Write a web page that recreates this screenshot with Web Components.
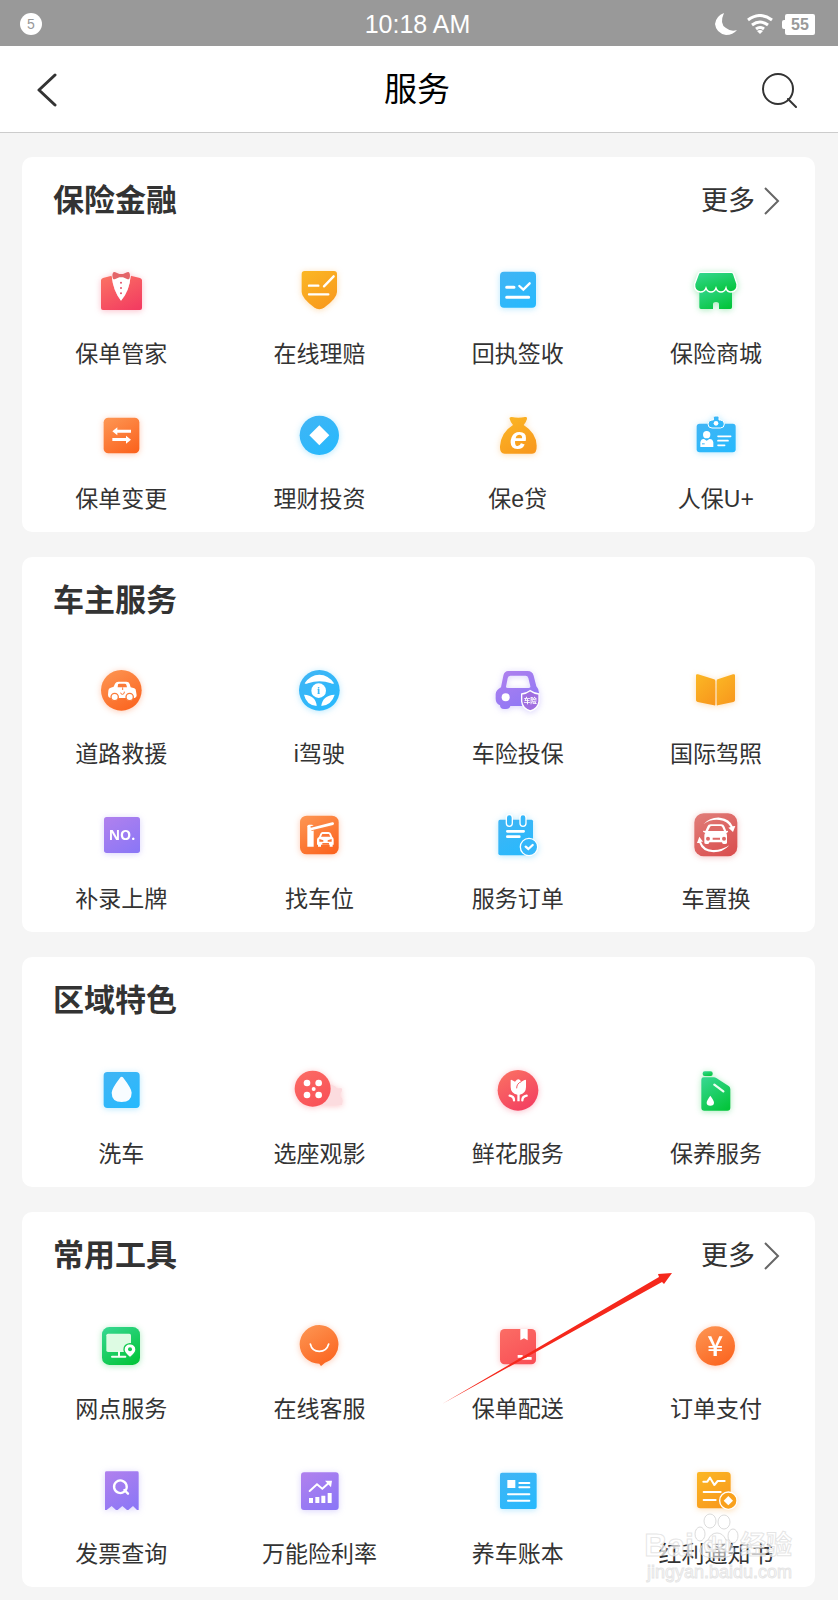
<!DOCTYPE html>
<html lang="zh-CN">
<head>
<meta charset="utf-8">
<meta name="viewport" content="width=device-width, initial-scale=1">
<title>服务</title>
<style>
    body{
        margin:0;
        min-height:100vh;
        background:#f5f5f5;
        color:#333;
        font-family:"Liberation Sans","Noto Sans CJK SC",sans-serif;
    }

    main{
        display:flex;
        flex-direction:column;
        gap:25px;
        padding:24px 23px 13px 22px;
    }
</style>
</head>
<body>
<status-bar count="5" battery="55">10:18 AM</status-bar>
<nav-bar>服务</nav-bar>

<main>
    <service-card more>
        <span slot="title">保险金融</span>
        <service-tile icon="butler" tone="red">保单管家</service-tile>
        <service-tile icon="shield" tone="amber">在线理赔</service-tile>
        <service-tile icon="receipt" tone="blue">回执签收</service-tile>
        <service-tile icon="shop" tone="green">保险商城</service-tile>
        <service-tile icon="change" tone="orange">保单变更</service-tile>
        <service-tile icon="invest" tone="blue">理财投资</service-tile>
        <service-tile icon="loan" tone="amber">保e贷</service-tile>
        <service-tile icon="member" tone="blue">人保U+</service-tile>
    </service-card>

    <service-card>
        <span slot="title">车主服务</span>
        <service-tile icon="rescue" tone="orange">道路救援</service-tile>
        <service-tile icon="wheel" tone="blue">i驾驶</service-tile>
        <service-tile icon="insure" tone="purple">车险投保</service-tile>
        <service-tile icon="book" tone="amber">国际驾照</service-tile>
        <service-tile icon="plate" tone="purple">补录上牌</service-tile>
        <service-tile icon="parking" tone="orange">找车位</service-tile>
        <service-tile icon="order" tone="blue">服务订单</service-tile>
        <service-tile icon="swap" tone="brick">车置换</service-tile>
    </service-card>

    <service-card>
        <span slot="title">区域特色</span>
        <service-tile icon="wash" tone="blue">洗车</service-tile>
        <service-tile icon="movie" tone="coral">选座观影</service-tile>
        <service-tile icon="flower" tone="red">鲜花服务</service-tile>
        <service-tile icon="oil" tone="green">保养服务</service-tile>
    </service-card>

    <service-card more>
        <span slot="title">常用工具</span>
        <service-tile icon="branch" tone="green">网点服务</service-tile>
        <service-tile icon="smile" tone="orange">在线客服</service-tile>
        <service-tile icon="parcel" tone="coral">保单配送</service-tile>
        <service-tile icon="pay" tone="orange">订单支付</service-tile>
        <service-tile icon="invoice" tone="purple">发票查询</service-tile>
        <service-tile icon="rate" tone="purple">万能险利率</service-tile>
        <service-tile icon="ledger" tone="blue">养车账本</service-tile>
        <service-tile icon="notice" tone="amber">红利通知书</service-tile>
        <pointer-arrow slot="overlay"></pointer-arrow>
        <water-mark slot="overlay"></water-mark>
    </service-card>
</main>

<script>
// start and end colour of each icon gradient
const tones = {
    red:['#fa6f63','#f33d61'],
    coral:['#fb6b64','#f94f56'],
    brick:['#e07a76','#da4f4f'],
    orange:['#fd9350','#fb641f'],
    amber:['#fbb524','#f8981d'],
    blue:['#3fb5f5','#27b9fd'],
    green:['#33d68c','#04c53b'],
    purple:['#ae80ee','#8c77f6']
}

// every icon is drawn on a 144 x 144 grid, "url(#g)" is the tone of the tile
const icons = {
    butler:`
        <path fill="url(#g)" d="M12 43q0-5 6-7l26-7q4 46 28 75q26-29 29-75l28 7q6 2 6 7v83q0 6-6 6H18q-6 0-6-6z"/>
        <path fill="#fff" d="M44 28q4 46 28 76q26-30 29-76z"/>
        <path fill="#e46469" d="M48 20q2-3 7-1l12 5h11l12-5q5-2 7 1q4 9 0 18q-2 3-7 1l-12-5H67l-12 5q-5 2-7-1q-4-9 0-18z"/>
        <g fill="#e4526a"><circle cx="72" cy="50" r="3"/><circle cx="72" cy="66" r="3"/><circle cx="72" cy="82" r="3"/></g>`,
    shield:`
        <path fill="url(#g)" d="M29 15h88q9 0 9 9v54q0 18-37 46q-16 12-32 0Q20 96 20 78V24q0-9 9-9z"/>
        <path stroke="#fff" stroke-width="7" stroke-linecap="round" d="M42 59h28M87 61l29-30M42 85h58"/>`,
    receipt:`
        <rect x="18" y="17" width="108" height="108" rx="12" fill="url(#g)"/>
        <g fill="none" stroke="#fff" stroke-linecap="round"><path stroke-width="9" d="M38 64h22M38 94h66"/><path stroke-width="7" d="M76 60l12 11l19-19"/></g>`,
    shop:`
        <path fill="url(#g)" d="M22 60h98v64q0 5-5 5H81v-15q0-6-9-6t-9 6v15H27q-5 0-5-5z"/>
        <path fill="url(#g)" stroke="#fff" stroke-width="4" d="M19 24q1-5 7-5h92q5 0 7 5l10 30q2 22-18 24q-12 0-15-12q-4 12-15 12t-15-12q-4 12-15 12T42 66q-4 12-17 12Q6 76 8 54z"/>`,
    change:`
        <rect x="20" y="20" width="107" height="107" rx="14" fill="url(#g)"/>
        <g fill="#fff"><path d="M46 61l15-12v7h41v9H61v8z"/><path d="M102 86l-15-12v7H46v9h41v8z"/></g>`,
    invest:`
        <circle cx="73" cy="73" r="59" fill="url(#g)"/>
        <path fill="#fff" d="M73 43l30 30l-30 30l-30-30z"/>`,
    loan:`
        <path fill="url(#g)" d="M47 24q-2-6 6-6q20 4 40 0q8-1 6 6q-2 8-10 18q38 24 39 62q1 24-14 24H32q-15 0-14-22q3-42 39-64q-8-10-10-18z"/>
        <text x="73" y="113" text-anchor="middle" fill="#fff" font-family="Liberation Sans" font-weight="700" font-style="italic" font-size="92">e</text>`,
    member:`
        <rect x="14" y="38" width="117" height="86" rx="9" fill="url(#g)"/>
        <path fill="url(#g)" stroke="#fff" stroke-width="3" d="M60 27h4v-8q0-4 5-4h7q5 0 5 4v8h4q12 0 12 12t-12 12H60q-12 0-12-12t12-12z"/>
        <g fill="#fff"><circle cx="72" cy="37" r="7"/><circle cx="44" cy="71" r="11"/><path d="M25 94q2-11 11-10l8 5l8-5q10-1 12 10v14H25z"/></g>
        <path fill="#3db6f7" d="M30 97h8v3h-8z"/>
        <path stroke="#fff" stroke-width="5" stroke-linecap="round" d="M78 76h38M78 89h30M78 103h20"/>`,
    rescue:`
        <circle cx="73" cy="73" r="61" fill="url(#g)"/>
        <path fill="#fff" d="M50 62l4-9q3-6 10-6h24q8 0 10 7l3 10l11 3q5 2 5 9l2 12q0 6-6 8H40q-7-2-7-9l1-13q0-8 7-9z"/>
        <path fill="#fb7b39" d="M63 55q1-2 4-2h16q4 0 5 3l2 8H62z"/>
        <path fill="none" stroke="#fb7b39" stroke-width="3" d="M77 64v8M71 80q1 6 6 5q6-1 5-8"/>
        <g fill="#fff" stroke="#fb7b39" stroke-width="4"><circle cx="53" cy="93" r="11"/><circle cx="98" cy="93" r="11"/></g>`,
    wheel:`
        <circle cx="73" cy="73" r="61" fill="url(#g)"/>
        <path fill="#fff" d="M29 52q17-26 44-26t44 26q-3 3-9 0q-34-12-69 0q-7 3-10 0z"/>
        <circle cx="71" cy="74" r="22" fill="#fff"/>
        <path fill="#fff" d="M27 86q36 2 38 34q-31-3-38-34zM119 86q-37 2-40 34q31-3 40-34z"/>
        <text x="71" y="85" text-anchor="middle" fill="#37b7f8" font-family="Liberation Serif" font-weight="700" font-size="34">i</text>`,
    insure:`
        <path fill="url(#g)" fill-rule="evenodd" d="M43 15h58q14 0 18 14l8 32q8 8 8 20v30q0 8-10 9H49q-2 9-13 9h-6q-12 0-12-11Q5 112 5 98V84q1-12 16-20l7-35q3-14 15-14zm6 14q-7 0-8 8l-5 25q0 4 5 4h64q5 0 4-5l-6-25q-2-7-8-7z"/>
        <circle cx="35" cy="94" r="12" fill="#fff"/>
        <path fill="#a06fe0" stroke="#fff" stroke-width="4" d="M108 74q13 9 27 10v22q-2 21-26 29q-24-8-26-29V84q13-1 25-10z"/>
        <text x="109" y="111" text-anchor="middle" fill="#fff" font-weight="700" font-size="20">车险</text>`,
    book:`
        <path fill="url(#g)" d="M12 28q0-5 6-3l48 15q4 1 4 5v71q0 3-4 2l-49-10q-5-1-5-5z"/>
        <path fill="url(#g)" d="M129 28q0-5-6-3L77 40q-3 1-3 5v71q0 3 3 2l47-10q5-1 5-5z"/>`,
    plate:`
        <rect x="21" y="18" width="108" height="108" rx="8" fill="url(#g)"/>
        <text x="75" y="88" text-anchor="middle" fill="#fff" font-family="Open Sans" font-weight="700" font-size="42">NO.</text>`,
    parking:`
        <rect x="15" y="14" width="116" height="116" rx="20" fill="url(#g)"/>
        <path fill="#fff" d="M37 46q0-5 5-5h9q5 0 5 5v61H37z"/>
        <path stroke="#fb8444" stroke-width="15" d="M48 53l66-15"/>
        <path stroke="#fff" stroke-width="8" stroke-linecap="round" d="M49 54l64-16"/>
        <path fill="#fff" d="M72 78l4-10q2-5 7-5h17q6 0 8 5l4 10q4 2 4 8v15h-3v6h-9v-6H78v6h-9v-6h-3V86q0-6 6-8z"/>
        <path fill="#fb7737" d="M78 77l4-8h20l4 8zM73 84l12 4v4H73zM110 84l-12 4v4h12zM82 96h20v5H82z"/>`,
    order:`
        <path fill="url(#g)" d="M18 26h95q4 0 4 5v97q0 5-5 5H19q-6 0-6-6V32q0-6 5-6z"/>
        <g fill="#35b7fa" stroke="#fff" stroke-width="4"><rect x="37" y="11" width="18" height="35" rx="9"/><rect x="78" y="11" width="18" height="35" rx="9"/></g>
        <path stroke="#fff" stroke-width="8" stroke-linecap="round" d="M40 61h49M40 77h36"/>
        <circle cx="105" cy="108" r="26" fill="#35b7fa" stroke="#fff" stroke-width="4"/>
        <path fill="none" stroke="#fff" stroke-width="7" stroke-linecap="round" d="M95 107l8 7l13-12"/>`,
    swap:`
        <rect x="7" y="7" width="129" height="129" rx="28" fill="url(#g)"/>
        <path fill="#fff" d="M40 60l7-15q2-5 9-5h32q7 0 9 6l6 14l4-1q3 2 0 5l-4 3q2 3 2 8v20q0 4-6 4h-4q-5 0-5-5H52q0 5-5 5h-4q-6 0-6-4V74q0-6 3-8l-6-3q-3-4 1-4z"/>
        <path fill="#dd6a67" d="M48 60l6-12q1-3 5-3h26q4 0 6 4l5 11zM62 80h22v6H62z"/>
        <circle cx="48" cy="83" r="6" fill="#dd6a67"/><circle cx="96" cy="83" r="6" fill="#dd6a67"/>
        <path fill="#fff" d="M34 40q20-22 50-20q30 4 38 26l8-1l-7 18l-14-13l7-2q-10-18-34-21q-26-3-48 13zM112 103q-19 21-47 21q-34-1-43-28h-7l7-19l11 15h-6q8 22 35 25q27 1 50-14z"/>`,
    wash:`
        <rect x="20" y="18" width="108" height="108" rx="11" fill="url(#g)"/>
        <path fill="#f8fcff" d="M74 32q4 0 7 6q23 30 23 42q0 28-30 28T44 80q0-12 23-42q3-6 7-6z"/>`,
    movie:`
        <path fill="#fcdcdf" d="M100 52l22 10q3 7 10 5h8q3 8-3 14q-5 5 0 12q8 5 5 16l-1 8H84q-2-5 2-8z"/>
        <circle cx="53" cy="68" r="54" fill="url(#g)"/>
        <g fill="#fff"><circle cx="36" cy="51" r="10"/><circle cx="71" cy="51" r="10"/><circle cx="36" cy="87" r="10"/><circle cx="71" cy="87" r="10"/><circle cx="56" cy="69" r="6"/></g>`,
    flower:`
        <circle cx="72" cy="73" r="61" fill="url(#g)"/>
        <path fill="#fff" d="M50 43q1-3 5 0l8 4q6-7 10-7t9 7l8-4q5-3 6 0v20q0 19-19 23v20h-7V86Q50 82 50 63z"/>
        <path fill="none" stroke="#f75a63" stroke-width="3" d="M82 47q-14 5-14 20"/>
        <g fill="none" stroke="#fff" stroke-width="7" stroke-linecap="round"><path d="M47 89q13 2 13 14M98 89q-13 2-13 14"/></g>`,
    oil:`
        <rect x="32" y="16" width="30" height="14" rx="6" fill="url(#g)"/>
        <path fill="url(#g)" d="M28 41q0-7 7-7h30q5 0 9 3l37 24q4 3 4 9v55q0 9-9 9H37q-9 0-9-9z"/>
        <path stroke="#e9fff0" stroke-width="7" stroke-linecap="round" d="M67 56l27 20"/>
        <path fill="#fff" d="M55 89q11 15 11 21q0 9-11 9t-11-9q0-6 11-21z"/>`,
    branch:`
        <rect x="15" y="18" width="114" height="114" rx="22" fill="url(#g)"/>
        <rect x="28" y="38" width="74" height="55" rx="5" fill="#ddfbe3"/>
        <path stroke="#f4fff6" stroke-width="6" stroke-linecap="round" d="M66 93v13M45 107h40"/>
        <path fill="#fff" stroke="#12c94f" stroke-width="4" d="M99 68q18 2 18 18q0 9-18 24q-18-15-18-24q0-16 18-18z"/>
        <circle cx="99" cy="85" r="6" fill="#12c94f"/>`,
    smile:`
        <path fill="url(#g)" d="M73 12a59 58 0 0 1 17 113l-9 8q-3 3-5 0l-3-5a59 58 0 0 1 0-116z"/>
        <path fill="none" stroke="#fff" stroke-width="5" stroke-linecap="round" d="M46 69q5 22 27 22t28-22"/>`,
    parcel:`
        <rect x="18" y="24" width="108" height="106" rx="14" fill="url(#g)"/>
        <path fill="#fff" d="M79 24h22v34l-11-6l-11 6zM98 108h15v8H80v-5h18zM71 102h15v8H71z"/>`,
    pay:`
        <circle cx="70" cy="75" r="59" fill="url(#g)"/>
        <text x="70" y="106" text-anchor="middle" fill="#fff" font-family="Noto Sans CJK SC" font-weight="500" font-size="84">¥</text>`,
    invoice:`
        <path fill="url(#g)" d="M29 16h92q4 0 4 4v112h-5l-12-12l-14 12h-4l-14-12l-14 12h-5l-13-12l-15 12h-5V20q0-4 5-4z"/>
        <path fill="none" stroke="#fff" stroke-width="7" stroke-linecap="round" d="M85 74a19 19 0 1 0-3 3M82 72l11 11"/>`,
    rate:`
        <rect x="18" y="19" width="113" height="113" rx="9" fill="url(#g)"/>
        <path fill="none" stroke="#fff" stroke-width="6" stroke-linecap="round" d="M44 75l22-20l16 13l20-18"/>
        <path fill="#fff" d="M90 44h21l-3 20zM42 96h12v15H42zM61 93h12v18H61zM79 89h12v22H79zM98 81h12v30H98z"/>`,
    ledger:`
        <rect x="18" y="20" width="110" height="109" rx="6" fill="url(#g)"/>
        <path fill="#fff" d="M40 42h24v24H40z"/>
        <path stroke="#fff" stroke-width="6" stroke-linecap="round" d="M76 51h30M76 64h30M42 85h64M42 104h64"/>`,
    notice:`
        <path fill="url(#g)" d="M21 18h84q11 0 11 11v92q0 6-6 6H25q-10 0-10-10V24q0-6 6-6z"/>
        <path fill="none" stroke="#fff" stroke-width="6" stroke-linecap="round" stroke-linejoin="round" d="M34 47h12l8-12l13 22l10-12h21M35 78h51M35 102h36"/>
        <circle cx="109" cy="104" r="26" fill="#f9a11c" stroke="#fff" stroke-width="4"/>
        <path fill="#fff" d="M109 90l14 14l-14 14l-14-14z"/>`
}


class BaseElement extends HTMLElement{
    constructor(){
        super()
        this.attachShadow({mode:'open'})
    }

    render(){
        const template = document.createElement("template")
        template.innerHTML = this.getTemplate() + this.getStyle()
        this.shadowRoot.append(template.content.cloneNode(true))
    }

    connectedCallback(){
        if(!this.shadowRoot.hasChildNodes()) this.render()
    }
}


class StatusBar extends BaseElement{
    getTemplate(){
        return `
        <span class="count">${this.getAttribute('count')}</span>
        <slot></slot>
        <div class="state">
            <svg width="22" height="22" viewBox="0 0 22 22" fill="#fff"><path d="M9 0q-5 11 2 15q5 4 11 2q-4 5-11 5Q1 20 0 11Q1 3 9 0z"/></svg>
            <svg width="26" height="20" viewBox="0 0 26 20" fill="none" stroke="#fff" stroke-width="3"><path d="M1 6Q13-3 25 6M5 11q8-6 16 0M9 15q4-3 8 0"/><path fill="#fff" stroke="none" d="M10 17q3-2 6 0l-3 3z"/></svg>
            <span class="battery">${this.getAttribute('battery')}</span>
        </div>`
    }

    getStyle(){
        return `
        <style>
            :host{
                display:grid;
                grid-template-columns:1fr auto 1fr;
                align-items:center;
                height:46px;
                padding:2px 23px 0 20px;
                box-sizing:border-box;
                background:#999;
                color:#fff;
                font-size:25px;
                line-height:28px;
            }
            .count{
                width:22px;
                height:22px;
                border-radius:50%;
                background:#fff;
                color:#999;
                font-size:14px;
                line-height:22px;
                text-align:center;
            }
            .state{
                display:flex;
                justify-content:flex-end;
                align-items:center;
                gap:10px;
            }
            .battery{
                position:relative;
                width:30px;
                border-radius:2px;
                background:#fff;
                color:#999;
                font-size:16px;
                font-weight:700;
                line-height:21px;
                text-align:center;
                margin-left:2px;
            }
            /* battery cap */
            .battery::before{
                content:"";
                position:absolute;
                left:-3px;
                top:6px;
                width:3px;
                height:9px;
                border-radius:2px 0 0 2px;
                background:#fff;
            }
        </style>`
    }
}


class NavBar extends BaseElement{
    getTemplate(){
        return `
        <button aria-label="返回">
            <svg width="20" height="34" viewBox="0 0 20 34"><path d="M18 2L2 17l16 15"/></svg>
        </button>
        <h1><slot></slot></h1>
        <button class="search" aria-label="搜索">
            <svg width="36" height="36" viewBox="0 0 36 36"><circle cx="17" cy="17" r="15"/><path d="M27 27l8 8"/></svg>
        </button>`
    }

    getStyle(){
        return `
        <style>
            :host{
                display:grid;
                grid-template-columns:1fr auto 1fr;
                align-items:center;
                height:87px;
                padding:2px 41px 0 37px;
                box-sizing:border-box;
                border-bottom:1px solid #ccc;
                background:#fff;
                color:#000;
            }
            h1{
                margin:0;
                font-size:33px;
                font-weight:400;
                line-height:48px;
            }
            button{
                display:flex;
                justify-self:start;
                padding:0;
                border:0;
                background:none;
            }
            .search{
                justify-self:end;
            }
            svg{
                fill:none;
                stroke:#333;
                stroke-width:3;
                stroke-linecap:round;
                stroke-linejoin:round;
            }
            .search svg{
                stroke-width:2;
            }
        </style>`
    }
}


class ServiceCard extends BaseElement{
    getTemplate(){
        const more = `
            <a href="#more">更多
                <svg width="16" height="28" viewBox="0 0 16 28"><path d="M1 1l13 13L1 27"/></svg>
            </a>`

        return `
        <header>
            <h2><slot name="title"></slot></h2>
            ${this.hasAttribute('more') ? more : ''}
        </header>
        <div class="grid"><slot></slot></div>
        <slot name="overlay"></slot>`
    }

    getStyle(){
        return `
        <style>
            :host{
                display:block;
                position:relative;
                border-radius:10px;
                background:#fff;
            }
            header{
                display:flex;
                justify-content:space-between;
                align-items:center;
                height:86px;
                padding:2px 35px 0 31px;
                box-sizing:border-box;
            }
            h2{
                margin:0;
                font-size:31px;
                font-weight:700;
                line-height:44px;
            }
            a{
                display:flex;
                align-items:center;
                gap:9px;
                color:inherit;
                font-size:27px;
                line-height:40px;
                text-decoration:none;
            }
            svg{
                fill:none;
                stroke:#666;
                stroke-width:2;
            }
            .grid{
                display:grid;
                grid-template-columns:repeat(4,1fr);
                row-gap:41px;
                padding:23px 0 17px;
            }
        </style>`
    }
}


class ServiceTile extends BaseElement{
    getTemplate(){
        const [from,to] = tones[this.getAttribute('tone')]

        return `
        <a href="#${this.getAttribute('icon')}">
            <svg width="48" height="48" viewBox="0 0 144 144" fill="none" aria-hidden="true" style="--glow:${to}55">
                <defs>
                    <linearGradient id="g" x1="0.2" y1="0" x2="0.8" y2="1">
                        <stop stop-color="${from}"/>
                        <stop offset="1" stop-color="${to}"/>
                    </linearGradient>
                </defs>
                ${icons[this.getAttribute('icon')]}
            </svg>
            <span><slot></slot></span>
        </a>`
    }

    getStyle(){
        return `
        <style>
            :host{
                display:block;
            }
            a{
                display:flex;
                flex-direction:column;
                align-items:center;
                gap:24px;
                color:inherit;
                font-size:23px;
                line-height:32px;
                text-decoration:none;
                white-space:nowrap;
            }
            svg{
                overflow:visible;
                filter:drop-shadow(0 1px 3px var(--glow));
            }
        </style>`
    }
}


// red arrow that points at the "more" link of its card
class PointerArrow extends BaseElement{
    getTemplate(){
        return `
        <svg width="231" height="132" viewBox="0 0 231 132"><path fill="#f5281c" d="M0 131L217 4l-1-3l14-1l-8 11l-2-2z"/></svg>`
    }

    getStyle(){
        return `
        <style>
            :host{
                position:absolute;
                top:61px;
                right:142px;
                pointer-events:none;
            }
            svg{
                display:block;
            }
        </style>`
    }
}


class WaterMark extends BaseElement{
    getTemplate(){
        return `
        <div class="brand">
            <span class="latin">Bai</span>
            <span class="paw">
                <svg width="46" height="46" viewBox="0 0 46 46">
                    <ellipse cx="6" cy="21" rx="5" ry="7"/>
                    <ellipse cx="16" cy="8" rx="6" ry="7"/>
                    <ellipse cx="30" cy="9" rx="6" ry="7"/>
                    <ellipse cx="39" cy="23" rx="5" ry="7"/>
                    <path d="M23 20q6 0 9 7q9 6 8 12q-2 6-17 6T6 39q-1-6 8-12q3-7 9-7z"/>
                </svg>
                <span>du</span>
            </span>
            <span class="han">经验</span>
        </div>
        <div class="site">jingyan.baidu.com</div>`
    }

    getStyle(){
        return `
        <style>
            :host{
                position:absolute;
                right:23px;
                bottom:2px;
                color:#ffffffbb;
                pointer-events:none;
                -webkit-text-stroke:1px #d8d8d8aa;
            }
            .brand{
                display:flex;
                justify-content:flex-end;
                align-items:flex-end;
                line-height:28px;
            }
            .latin{
                font-size:32px;
                font-weight:700;
            }
            .paw{
                position:relative;
                font-size:22px;
                font-weight:700;
                text-align:center;
            }
            .paw svg{
                display:block;
                fill:#ffffff88;
                stroke:#d2d2d2cc;
            }
            .paw span{
                position:absolute;
                inset:auto 0 0;
            }
            .han{
                font-size:26px;
                font-weight:700;
            }
            .site{
                font-size:18px;
                line-height:26px;
                text-align:right;
            }
        </style>`
    }
}

customElements.define('status-bar',StatusBar)
customElements.define('nav-bar',NavBar)
customElements.define('service-card',ServiceCard)
customElements.define('service-tile',ServiceTile)
customElements.define('pointer-arrow',PointerArrow)
customElements.define('water-mark',WaterMark)
</script>
</body>
</html>
